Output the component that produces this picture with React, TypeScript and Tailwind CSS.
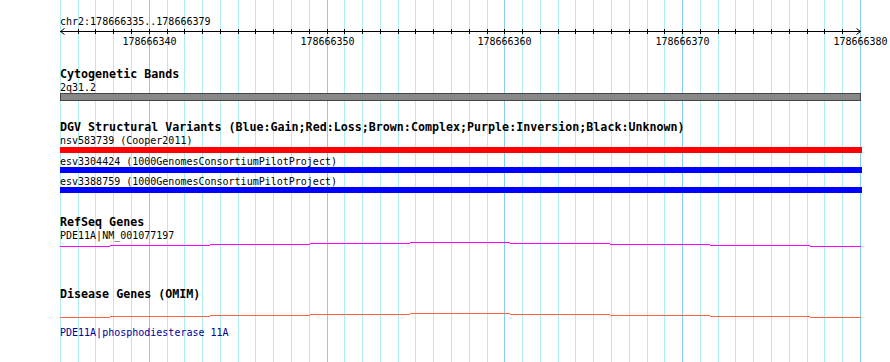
import React from 'react';

const LEFT = 60;
const SCALE = 800 / 45;

// grid positions, one per base
const gridX = Array.from({ length: 46 }, (_, i) => Math.floor(60.4 + i * SCALE));
const majors = [5, 15, 25, 35, 45];
const majorLabels = ['178666340', '178666350', '178666360', '178666370', '178666380'];

// shallow "hat" connector, rastered as 1px steps
const steps: [number, number, number][] = [
  [60, 110, 4],
  [110, 210, 3],
  [210, 310, 2],
  [310, 410, 1],
  [410, 510, 0],
  [510, 610, 1],
  [610, 710, 2],
  [710, 810, 3],
  [810, 861, 4],
];

function Grid() {
  return (
    <svg className="absolute inset-0" width={890} height={362} shapeRendering="crispEdges">
      {gridX.map((x, i) => (
        <rect key={i} x={x} y={0} width={1} height={362} fill={majors.includes(i) ? '#86cdee' : '#aeeef0'} />
      ))}
    </svg>
  );
}

function Ruler() {
  return (
    <svg width={890} height={20} className="block">
      <g shapeRendering="crispEdges">
        <rect x={LEFT} y={3} width={801} height={1} fill="#000" />
        {gridX.slice(1, 45).map((x, i) => (
          <rect key={i} x={x} y={1} width={1} height={5} fill="#000" />
        ))}
      </g>
      <path d="M64.5 0.5 L60.5 3.5 L64.5 6.5" stroke="#000" fill="none" strokeWidth={1} />
      <path d="M856.5 0.5 L860.5 3.5 L856.5 6.5" stroke="#000" fill="none" strokeWidth={1} />
      {majors.map((m, i) => (
        <text
          key={m}
          x={gridX[m] + 0.5}
          y={16.5}
          textAnchor="middle"
          fontSize={10}
          fontFamily="'DejaVu Sans Mono', 'Liberation Mono', monospace"
          fill="#000"
        >
          {majorLabels[i]}
        </text>
      ))}
    </svg>
  );
}

function StepLine({ color }: { color: string }) {
  return (
    <svg width={890} height={5} className="block" shapeRendering="crispEdges">
      {steps.map(([a, b, y], i) => (
        <rect key={i} x={a} y={y} width={b - a} height={1} fill={color} />
      ))}
    </svg>
  );
}

function Title({ children, className = '' }: { children: React.ReactNode; className?: string }) {
  return (
    <div className={`pl-[60px] h-[13px] leading-[13px] text-[11.67px] font-bold whitespace-nowrap ${className}`}>
      {children}
    </div>
  );
}

function Label({ children, className = '' }: { children: React.ReactNode; className?: string }) {
  return (
    <div className={`pl-[60px] h-[12px] leading-[13px] text-[10px] whitespace-nowrap ${className}`}>
      {children}
    </div>
  );
}

export default function App() {
  return (
    <div className="relative w-[890px] h-[362px] overflow-hidden bg-white text-black font-['DejaVu_Sans_Mono','Liberation_Mono',monospace]">
      <Grid />
      <div className="relative flex flex-col">
        <Label className="mt-[15px] h-[13px]">chr2:178666335..178666379</Label>
        <Ruler />

        <Title className="mt-[20px]">Cytogenetic Bands</Title>
        <Label>2q31.2</Label>
        <div className="ml-[60px] w-[801px] h-[8px] bg-[#888888] border border-[#444444]" />

        <Title className="mt-[20px]">
          DGV Structural Variants (Blue:Gain;Red:Loss;Brown:Complex;Purple:Inversion;Black:Unknown)
        </Title>
        <Label className="h-[13px]">nsv583739 (Cooper2011)</Label>
        <div className="ml-[60px] w-[802px] h-[6px] bg-[#ff0000]" />
        <Label className="mt-[2px]">esv3304424 (1000GenomesConsortiumPilotProject)</Label>
        <div className="ml-[60px] w-[802px] h-[6px] bg-[#0000ff]" />
        <Label className="mt-[2px]">esv3388759 (1000GenomesConsortiumPilotProject)</Label>
        <div className="ml-[60px] w-[802px] h-[6px] bg-[#0000ff]" />

        <Title className="mt-[23px]">RefSeq Genes</Title>
        <Label className="h-[13px]">PDE11A|NM_001077197</Label>
        <StepLine color="#ff00ff" />

        <Title className="mt-[41px]">Disease Genes (OMIM)</Title>
        <div className="mt-[12px]">
          <StepLine color="#ff6347" />
        </div>
        <Label className="mt-[8px] h-[13px] text-[#000099]">PDE11A|phosphodiesterase 11A</Label>
      </div>
    </div>
  );
}
